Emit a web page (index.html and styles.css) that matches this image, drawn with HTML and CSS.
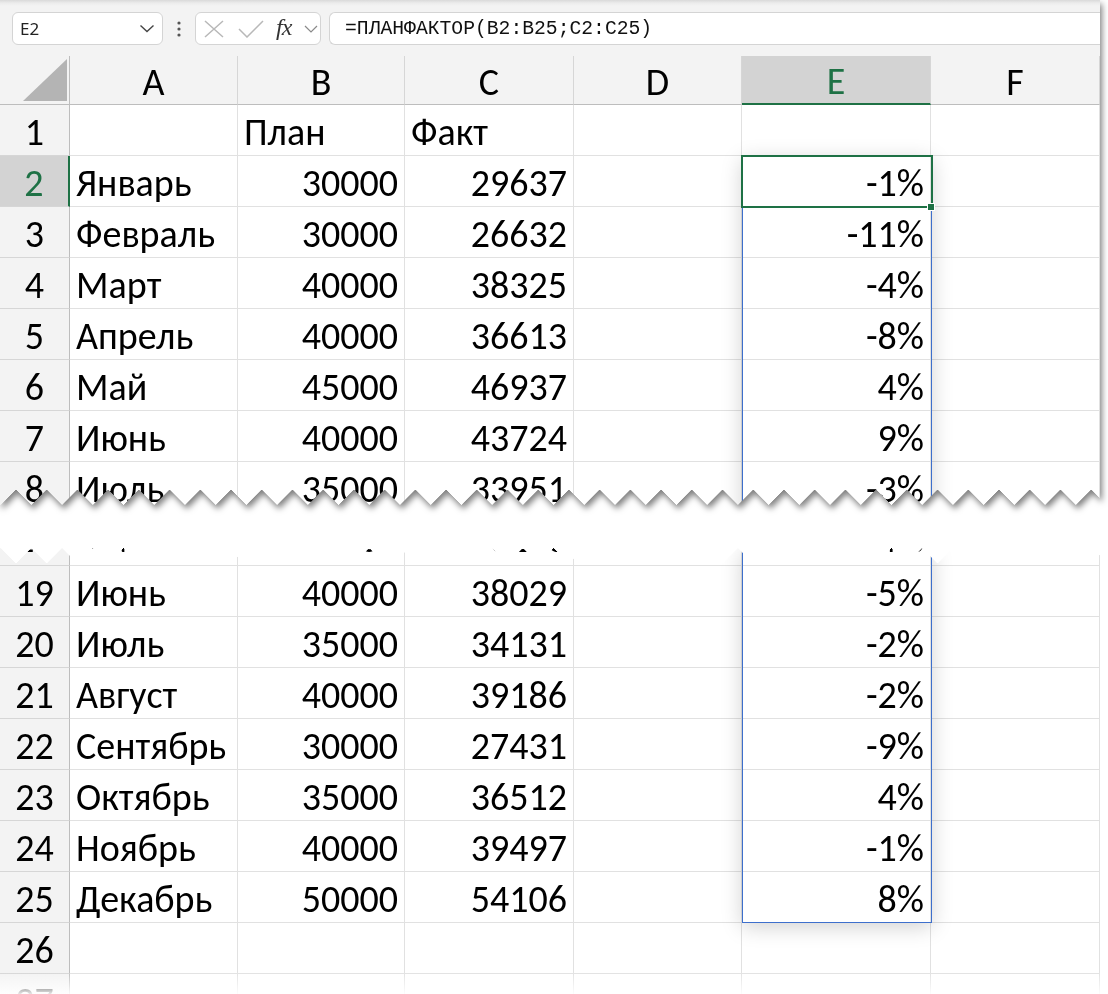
FILE: index.html
```html
<!DOCTYPE html>
<html lang="ru">
<head>
<meta charset="utf-8">
<title>ПЛАНФАКТОР</title>
<link rel="stylesheet" href="styles.css">
</head>
<body>
<div class="page">
  <div class="tear-top-wrap">
    <div class="tear-top">
      <div class="toolbar">
        <div class="namebox">
          <span class="name">E2</span>
          <svg class="chev" width="16" height="9" viewBox="0 0 16 9"><path d="M1.5 1.5 L8 7.5 L14.5 1.5" fill="none" stroke="#444" stroke-width="1.4"/></svg>
        </div>
        <div class="dots">
          <svg width="6" height="16" viewBox="0 0 6 16"><circle cx="3" cy="2" r="1.6" fill="#555"/><circle cx="3" cy="8" r="1.6" fill="#555"/><circle cx="3" cy="14" r="1.6" fill="#555"/></svg>
        </div>
        <div class="fxbox">
          <svg class="ico-x" width="20" height="18" viewBox="0 0 20 18"><path d="M1 1 L19 17 M19 1 L1 17" fill="none" stroke="#b8b8b8" stroke-width="1.5"/></svg>
          <svg class="ico-ok" width="26" height="18" viewBox="0 0 26 18"><path d="M1 9 L9 17 L25 1" fill="none" stroke="#b8b8b8" stroke-width="1.5"/></svg>
          <span class="fx">fx</span>
          <svg class="chev-s" width="14" height="8" viewBox="0 0 14 8"><path d="M1 1 L7 7 L13 1" fill="none" stroke="#8a8a8a" stroke-width="1.2"/></svg>
        </div>
        <div class="formula">=ПЛАНФАКТОР(B2:B25;C2:C25)</div>
      </div>
      <div class="grid grid-top">
        <div class="corner"><svg width="44" height="42" viewBox="0 0 44 42"><path d="M44 0 L44 42 L0 42 Z" fill="#b4b4b4"/></svg></div>
        <div class="ch">A</div><div class="ch">B</div><div class="ch">C</div><div class="ch">D</div><div class="ch sel">E</div><div class="ch">F</div>

        <div class="rh">1</div><div class="c"></div><div class="c">План</div><div class="c">Факт</div><div class="c"></div><div class="c"></div><div class="c"></div>
        <div class="rh sel">2</div><div class="c">Январь</div><div class="c n">30000</div><div class="c n">29637</div><div class="c"></div><div class="c n e">-1%</div><div class="c"></div>
        <div class="rh">3</div><div class="c">Февраль</div><div class="c n">30000</div><div class="c n">26632</div><div class="c"></div><div class="c n e">-11%</div><div class="c"></div>
        <div class="rh">4</div><div class="c">Март</div><div class="c n">40000</div><div class="c n">38325</div><div class="c"></div><div class="c n e">-4%</div><div class="c"></div>
        <div class="rh">5</div><div class="c">Апрель</div><div class="c n">40000</div><div class="c n">36613</div><div class="c"></div><div class="c n e">-8%</div><div class="c"></div>
        <div class="rh">6</div><div class="c">Май</div><div class="c n">45000</div><div class="c n">46937</div><div class="c"></div><div class="c n e">4%</div><div class="c"></div>
        <div class="rh">7</div><div class="c">Июнь</div><div class="c n">40000</div><div class="c n">43724</div><div class="c"></div><div class="c n e">9%</div><div class="c"></div>
        <div class="rh">8</div><div class="c">Июль</div><div class="c n">35000</div><div class="c n">33951</div><div class="c"></div><div class="c n e">-3%</div><div class="c"></div>

        <div class="spill spill-top"></div>
        <div class="active"></div>
        <div class="handle"></div>
      </div>
    </div>
  </div>

  <div class="tear-bottom">
    <div class="grid grid-bottom">
      <div class="rh short">18</div><div class="c short">Май</div><div class="c n short">45000</div><div class="c n short">43268</div><div class="c short"></div><div class="c n e short">-4%</div><div class="c short"></div>
      <div class="rh">19</div><div class="c">Июнь</div><div class="c n">40000</div><div class="c n">38029</div><div class="c"></div><div class="c n e">-5%</div><div class="c"></div>
      <div class="rh">20</div><div class="c">Июль</div><div class="c n">35000</div><div class="c n">34131</div><div class="c"></div><div class="c n e">-2%</div><div class="c"></div>
      <div class="rh">21</div><div class="c">Август</div><div class="c n">40000</div><div class="c n">39186</div><div class="c"></div><div class="c n e">-2%</div><div class="c"></div>
      <div class="rh">22</div><div class="c">Сентябрь</div><div class="c n">30000</div><div class="c n">27431</div><div class="c"></div><div class="c n e">-9%</div><div class="c"></div>
      <div class="rh">23</div><div class="c">Октябрь</div><div class="c n">35000</div><div class="c n">36512</div><div class="c"></div><div class="c n e">4%</div><div class="c"></div>
      <div class="rh">24</div><div class="c">Ноябрь</div><div class="c n">40000</div><div class="c n">39497</div><div class="c"></div><div class="c n e">-1%</div><div class="c"></div>
      <div class="rh">25</div><div class="c">Декабрь</div><div class="c n">50000</div><div class="c n">54106</div><div class="c"></div><div class="c n e">8%</div><div class="c"></div>
      <div class="rh">26</div><div class="c"></div><div class="c"></div><div class="c"></div><div class="c"></div><div class="c"></div><div class="c"></div>
      <div class="rh">27</div><div class="c"></div><div class="c"></div><div class="c"></div><div class="c"></div><div class="c"></div><div class="c"></div>
      <div class="spill spill-bottom"></div>
    </div>
  </div>
  <div class="fade"></div>
</div>
</body>
</html>
```

FILE: styles.css
```css
* { box-sizing: border-box; }
html, body { margin: 0; padding: 0; background: #fff; }
body { width: 1108px; height: 994px; overflow: hidden; }

.page {
  position: relative;
  width: 1108px;
  height: 994px;
  overflow: hidden;
}

/* ---------- torn top piece ---------- */
.tear-top-wrap {
  width: 1100px;
  height: 505px;
  filter: drop-shadow(2px 4px 3px rgba(0,0,0,0.5));
}
.tear-top {
  width: 1100px;
  height: 505px;
  overflow: hidden;
  background: #fff;
  -webkit-mask: conic-gradient(from -45deg at bottom, #0000, #000 1deg 89deg, #0000 90deg) 16px 0 / 30.73px 100% repeat-x;
  mask: conic-gradient(from -45deg at bottom, #0000, #000 1deg 89deg, #0000 90deg) 16px 0 / 30.73px 100% repeat-x;
}

/* ---------- formula bar ---------- */
.toolbar {
  height: 56px;
  display: flex;
  align-items: flex-start;
  padding: 12px 0 0 12px;
  background: linear-gradient(#d9d9d9 0, #ececec 3px, #f3f3f3 6px);
}
.namebox, .fxbox, .formula {
  height: 33px;
  background: #fff;
  border: 1px solid #d4d4d4;
  border-radius: 6px;
  display: flex;
  align-items: center;
}
.namebox {
  width: 151px;
  padding: 0 7px 0 7px;
  justify-content: space-between;
}
.name {
  font-family: "Noto Sans", "Open Sans", sans-serif;
  font-size: 17px;
  color: #222;
}
.dots {
  width: 32px;
  height: 33px;
  display: flex;
  align-items: center;
  justify-content: center;
}
.fxbox {
  width: 126px;
  padding: 0 0 0 8px;
}
.ico-x { margin-right: 14px; }
.ico-ok { margin-right: 12px; }
.fx {
  font-family: "Liberation Serif", serif;
  font-style: italic;
  font-size: 24px;
  color: #333;
  width: 28px;
  letter-spacing: -1px;
  line-height: 1;
  margin-top: -3px;
}
.formula {
  flex: 1;
  margin-left: 8px;
  border-right: none;
  border-radius: 6px 0 0 6px;
  padding-left: 15px;
  font-family: "Liberation Mono", "DejaVu Sans Mono", monospace;
  font-size: 19.7px;
  color: #111;
  white-space: nowrap;
}

/* ---------- grid ---------- */
.grid {
  position: relative;
  display: grid;
  grid-template-columns: 70px 168px 167px 169px 168px 189px 169px;
  grid-auto-rows: 51px;
  font-family: "Carlito", "Liberation Sans", sans-serif;
  font-size: 38px;
  color: #000;
}
.grid-top { grid-template-rows: 49px; }
.grid-bottom { grid-template-rows: 18px; }

.corner {
  background: #f3f3f3;
  border-right: 1px solid #bdbdbd;
  border-bottom: 1px solid #bdbdbd;
  display: flex;
  align-items: flex-end;
  justify-content: flex-end;
  padding: 0 2px 3px 0;
}
.ch {
  background: #f3f3f3;
  border-right: 1px solid #d6d6d6;
  border-bottom: 1px solid #bdbdbd;
  display: flex;
  align-items: center;
  justify-content: center;
  line-height: 49px;
  padding-top: 4px;
}
.ch.sel {
  background: #d3d3d3;
  color: #1e7145;
  border-bottom: 2px solid #1e7145;
}
.rh {
  background: #f3f3f3;
  border-right: 1px solid #bdbdbd;
  border-bottom: 1px solid #d6d6d6;
  display: flex;
  align-items: center;
  justify-content: center;
  line-height: 51px;
  padding-top: 4px;
  overflow: hidden;
}
.rh.sel {
  background: #d3d3d3;
  color: #1e7145;
  border-right: 2px solid #1e7145;
}
.c {
  border-right: 1px solid #e1e1e1;
  border-bottom: 1px solid #e1e1e1;
  display: flex;
  align-items: center;
  padding: 4px 6px 0 6px;
  line-height: 51px;
  white-space: nowrap;
}
.c.n { justify-content: flex-end; }
.short { align-items: flex-end; overflow: hidden; padding-top: 0; }

/* ---------- selection overlays ---------- */
.spill {
  position: absolute;
  left: 742px;
  width: 190px;
  border-left: 1px solid #3d6fcc;
  border-right: 1px solid #3d6fcc;
  box-shadow: 0 4px 20px rgba(0,0,0,0.18);
  pointer-events: none;
}
.spill-top { top: 100px; height: 420px; }
.spill-bottom { top: 0; height: 375px; border-bottom: 1px solid #3d6fcc; }
.active {
  position: absolute;
  left: 741px;
  top: 99px;
  width: 192px;
  height: 53px;
  border: 2px solid #1e7145;
}
.handle {
  position: absolute;
  left: 927px;
  top: 147px;
  width: 8px;
  height: 8px;
  background: #1e7145;
  border: 1px solid #fff;
}

/* ---------- torn bottom piece ---------- */
.tear-bottom {
  width: 1100px;
  margin-top: 43px;
  background: #fff;
  -webkit-mask: conic-gradient(from 135deg at top, #0000, #000 1deg 89deg, #0000 90deg) 16px 0 / 30.73px 100% repeat-x;
  mask: conic-gradient(from 135deg at top, #0000, #000 1deg 89deg, #0000 90deg) 16px 0 / 30.73px 100% repeat-x;
}

.fade {
  position: absolute;
  left: 0;
  right: 0;
  bottom: 0;
  height: 22px;
  background: linear-gradient(rgba(255,255,255,0), rgba(255,255,255,0.9));
}
```
